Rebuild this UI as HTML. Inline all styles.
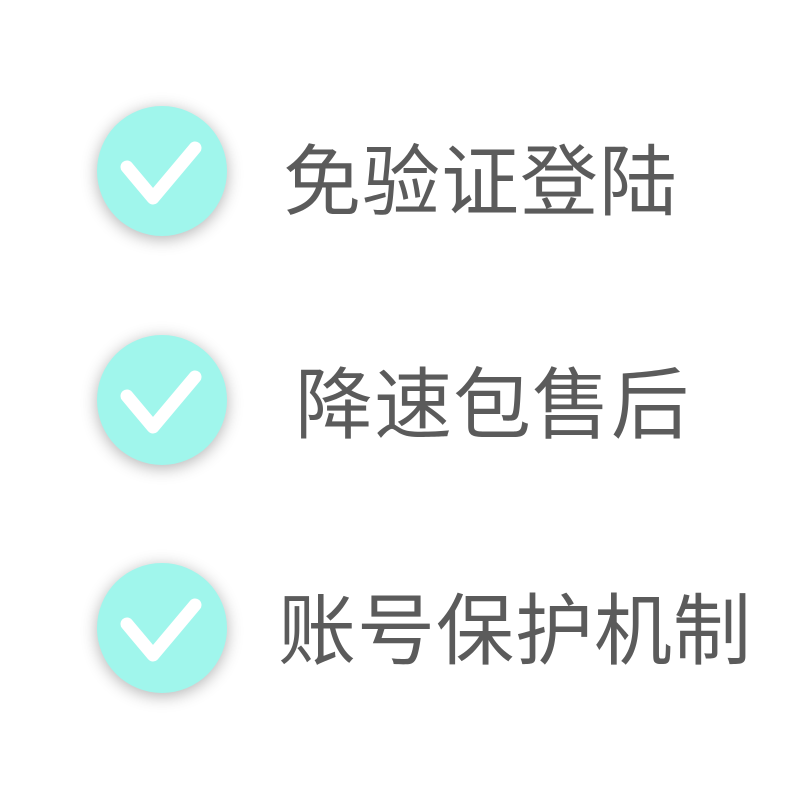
<!DOCTYPE html>
<html><head><meta charset="utf-8"><style>
body{margin:0;width:800px;height:800px;background:#fff;position:relative;overflow:hidden}
.c{position:absolute;left:97px;width:130px;height:130px;border-radius:50%;background:#a0f6ec;box-shadow:0 3px 16px rgba(0,0,0,0.3)}
.c svg{position:absolute;left:0;top:0}
.t{position:absolute;font-family:"Liberation Sans","Noto Sans CJK SC",sans-serif;font-size:78px;line-height:78px;color:#5b5b5b;white-space:nowrap}
</style></head><body>
<div class="c" style="top:106px"><svg width="130" height="130"><path d="M30 61 L56 92 L98 42" fill="none" stroke="#fff" stroke-width="13" stroke-linecap="round" stroke-linejoin="round"/></svg></div>
<div class="c" style="top:335px"><svg width="130" height="130"><path d="M30 61 L56 92 L98 42" fill="none" stroke="#fff" stroke-width="13" stroke-linecap="round" stroke-linejoin="round"/></svg></div>
<div class="c" style="top:563px"><svg width="130" height="130"><path d="M30 61 L56 92 L98 42" fill="none" stroke="#fff" stroke-width="13" stroke-linecap="round" stroke-linejoin="round"/></svg></div>
<div class="t" style="left:283px;top:143px;letter-spacing:1px">免验证登陆</div>
<div class="t" style="left:295px;top:366px;letter-spacing:1px">降速包售后</div>
<div class="t" style="left:278px;top:592px;letter-spacing:1px">账号保护机制</div>
</body></html>
